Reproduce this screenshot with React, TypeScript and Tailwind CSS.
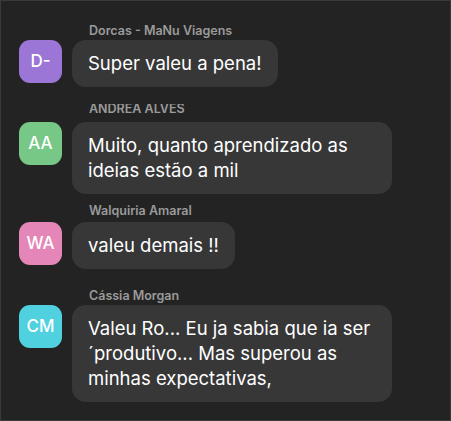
const messages = [
  {
    name: "Dorcas - MaNu Viagens",
    initials: "D-",
    color: "bg-[#9b76d6]",
    text: "Super valeu a pena!",
    wrap: "mt-[21px]",
    inner: "mt-0",
  },
  {
    name: "ANDREA ALVES",
    initials: "AA",
    color: "bg-[#77c886]",
    text: "Muito, quanto aprendizado as ideias estão a mil",
    wrap: "mt-[17px]",
    inner: "-mt-[4px]",
  },
  {
    name: "Walquiria Amaral",
    initials: "WA",
    color: "bg-[#e487b8]",
    text: "valeu demais !!",
    wrap: "mt-[10px]",
    inner: "-mt-[2px]",
  },
  {
    name: "Cássia Morgan",
    initials: "CM",
    color: "bg-[#4fd1df]",
    text: "Valeu Ro... Eu ja sabia que ia ser ´produtivo... Mas superou as minhas expectativas,",
    wrap: "mt-[18px]",
    inner: "mt-0",
  },
];

export default function App() {
  return (
    <div
      className="w-[451px] h-[421px] bg-[#232323] border border-[#3a3a3a] overflow-hidden"
      style={{ fontFamily: "Inter, 'Noto Sans', sans-serif" }}
    >
      <div className="flex flex-col pl-[18px]">
        {messages.map((m) => (
          <div key={m.initials} className={m.wrap}>
            {/* name label, clipped like the scrolled original */}
            <div className="h-[18px] overflow-hidden pl-[70px]">
              <div
                className={`${m.inner} text-[12.5px] font-semibold leading-[18px] text-[#9a9a9a]`}
              >
                {m.name}
              </div>
            </div>
            <div className="flex items-start gap-[10px]">
              <div
                className={`${m.color} w-[43px] h-[43px] shrink-0 rounded-[11px] flex items-center justify-center text-white text-[17px] font-medium`}
              >
                {m.initials}
              </div>
              <div className="max-w-[320px] rounded-[14px] bg-[#373737] px-[16px] py-[11px] text-[18.5px] leading-[25px] text-white">
                {m.text}
              </div>
            </div>
          </div>
        ))}
      </div>
    </div>
  );
}
